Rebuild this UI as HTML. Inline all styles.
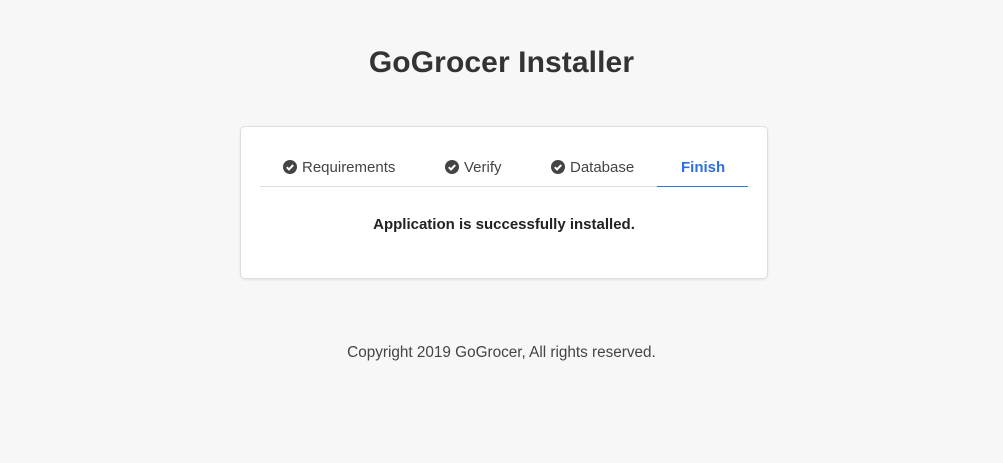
<!DOCTYPE html>
<html><head><style>
body{margin:0;background:#f7f7f7;font-family:"Liberation Sans",sans-serif;color:#333;width:1003px;height:463px;position:relative}
h1{position:absolute;top:44px;left:0;width:1003px;text-align:center;margin:0;font-size:30px;font-weight:bold;color:#333;line-height:38px;letter-spacing:0.1px}
.card{position:absolute;left:240px;top:126px;width:526px;height:151px;background:#fff;border:1px solid #ddd;border-radius:5px;box-shadow:0 1px 2px rgba(0,0,0,.08)}
.line{position:absolute;left:19px;top:59px;width:488px;height:1px;background:#ddd}
.act{position:absolute;left:416px;top:59px;width:91px;height:1px;background:#2d74e0}
.t{position:absolute;top:32px;font-size:15px;color:#444;line-height:18px;white-space:nowrap}
.t svg{vertical-align:-2px;margin-right:5px}
.msg{position:absolute;top:89px;left:0;width:526px;text-align:center;font-weight:bold;font-size:15px;color:#222}
.foot{position:absolute;top:344px;left:0;width:1003px;text-align:center;font-size:15.3px;color:#444}
</style></head><body>
<h1>GoGrocer Installer</h1>
<div class="card">
<div class="line"></div><div class="act"></div>
<div class="t" style="left:42px"><svg width="14" height="14" viewBox="0 0 14 14"><circle cx="7" cy="7" r="7" fill="#444"/><path d="M3.8 7.2l2.2 2.2 4.2-4.4" stroke="#fff" stroke-width="2" fill="none"/></svg>Requirements</div>
<div class="t" style="left:204px"><svg width="14" height="14" viewBox="0 0 14 14"><circle cx="7" cy="7" r="7" fill="#444"/><path d="M3.8 7.2l2.2 2.2 4.2-4.4" stroke="#fff" stroke-width="2" fill="none"/></svg>Verify</div>
<div class="t" style="left:310px"><svg width="14" height="14" viewBox="0 0 14 14"><circle cx="7" cy="7" r="7" fill="#444"/><path d="M3.8 7.2l2.2 2.2 4.2-4.4" stroke="#fff" stroke-width="2" fill="none"/></svg>Database</div>
<div class="t" style="left:440px;color:#2d6fe0;font-weight:bold">Finish</div>
<div class="msg">Application is successfully installed.</div>
</div>
<div class="foot">Copyright 2019 GoGrocer, All rights reserved.</div>
</body></html>
